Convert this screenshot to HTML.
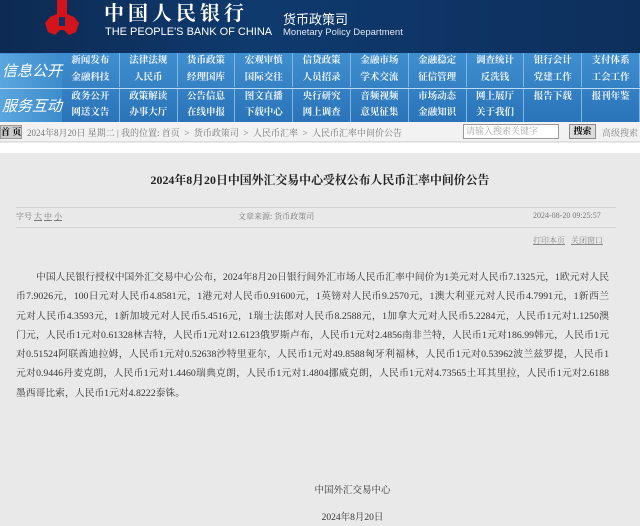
<!DOCTYPE html>
<html><head><meta charset="utf-8"><style>
*{margin:0;padding:0;box-sizing:border-box}
body{width:640px;height:526px;overflow:hidden;background:#e9e9e9;font-family:"Liberation Serif","Noto Serif CJK SC",serif;position:relative}
.hd{position:absolute;left:0;top:0;width:640px;height:53px;background:linear-gradient(90deg,#0d2a52,#0f3a6e 40%,#0d2f5c 100%)}
.nav{position:absolute;left:0;top:53px;width:640px;height:69px;background:linear-gradient(#3f8fd0,#2a73b8)}
.side{position:absolute;left:0;width:62px;height:34px;color:#fff;font-size:15px;font-style:italic;line-height:34px;padding-left:2px;font-family:"Noto Sans CJK SC",sans-serif;background:linear-gradient(90deg,#5aa6e0,#3d8ccb)}
.row{position:absolute;left:62px;width:578px;height:17px;display:flex}
.row span{width:57.8px;text-align:center;color:#f0f6ff;font-size:9.5px;font-weight:bold;line-height:17px;border-right:1px solid #7fb6e3}
.t{position:absolute;white-space:nowrap}
.bc{position:absolute;left:0;top:122px;width:640px;height:20px;background:#f2f2f2;border-bottom:1px solid #ddd}
.body{position:absolute;left:16px;top:268px;width:593px;font-size:9.8px;line-height:19.3px;color:#333}
.body div{white-space:nowrap;text-align:justify;text-align-last:justify}
.body div.l{text-align-last:left}
</style></head><body>
<div class="hd">
<svg style="position:absolute;left:44px;top:0" width="36" height="40" viewBox="0 0 36 40"><path d="M13 0h10v14l7 3 5 6-3 9-7 3-5-5h-4l-5 5-7-3-3-9 5-6 7-3z" fill="#d3141b"/><path d="M15 17h6v9h-6z" fill="#0e3263"/></svg>
<div class="t" style="left:104px;top:0px;color:#fff;font-size:20px;letter-spacing:4px;font-family:'Noto Serif CJK SC',serif;font-weight:bold;line-height:24px">中国人民银行</div>
<div class="t" style="left:105px;top:26px;color:#fff;font-size:11px;font-family:'Liberation Sans',sans-serif">THE PEOPLE'S BANK OF CHINA</div>
<div class="t" style="left:283px;top:9px;color:#fff;font-size:13px;font-family:'Noto Sans CJK SC',sans-serif">货币政策司</div>
<div class="t" style="left:283px;top:27px;color:#dfe8f5;font-size:9.5px;font-family:'Liberation Sans',sans-serif">Monetary Policy Department</div>
</div>
<div class="nav">
<div class="side" style="top:1px">信息公开</div>
<div class="side" style="top:35px;border-top:1px solid #bcdaf2">服务互动</div>
<div class="row" style="top:0"><span>新闻发布</span><span>法律法规</span><span>货币政策</span><span>宏观审慎</span><span>信贷政策</span><span>金融市场</span><span>金融稳定</span><span>调查统计</span><span>银行会计</span><span>支付体系</span></div>
<div class="row" style="top:17px"><span>金融科技</span><span>人民币</span><span>经理国库</span><span>国际交往</span><span>人员招录</span><span>学术交流</span><span>征信管理</span><span>反洗钱</span><span>党建工作</span><span>工会工作</span></div>
<div class="row" style="top:35px;border-top:1px solid #bcdaf2"><span>政务公开</span><span>政策解读</span><span>公告信息</span><span>图文直播</span><span>央行研究</span><span>音频视频</span><span>市场动态</span><span>网上展厅</span><span>报告下载</span><span>报刊年鉴</span></div>
<div class="row" style="top:52px"><span>网送文告</span><span>办事大厅</span><span>在线申报</span><span>下载中心</span><span>网上调查</span><span>意见征集</span><span>金融知识</span><span>关于我们</span><span></span><span></span></div>
</div>
<div class="bc">
<div class="t" style="left:0;top:3px;width:22px;height:14px;background:#ccc;border:1px solid #999;font-size:9px;line-height:12px;text-align:center;font-weight:bold">首 页</div>
<div class="t" style="left:27px;top:4px;font-size:9px;color:#777">2024年8月20日 星期二 | 我的位置: 首页 &nbsp;&gt;&nbsp; 货币政策司 &nbsp;&gt;&nbsp; 人民币汇率 &nbsp;&gt;&nbsp; 人民币汇率中间价公告</div>
<div class="t" style="left:463px;top:2px;width:96px;height:15px;background:#fff;border:1px solid #999;font-size:9px;color:#aaa;line-height:13px;padding-left:2px">请输入搜索关键字</div>
<div class="t" style="left:569px;top:2px;width:27px;height:15px;background:#ddd;border:1px solid #888;font-size:9px;line-height:13px;text-align:center;font-weight:bold">搜索</div>
<div class="t" style="left:602px;top:4px;font-size:9px;color:#888">高级搜索</div>
</div>
<div class="t" style="left:0;top:143px;width:640px;height:10px;background:#fff"></div>
<div class="t" style="left:0;top:171px;width:640px;text-align:center;font-size:11.9px;font-weight:bold;color:#222">2024年8月20日中国外汇交易中心受权公布人民币汇率中间价公告</div>
<div class="t" style="left:16px;top:207px;width:600px;height:1px;background:#d4d4d4"></div>
<div class="t" style="left:16px;top:211px;font-size:8px;color:#777">字号 <u>大</u> <u>中</u> <u>小</u></div>
<div class="t" style="left:238px;top:211px;font-size:8px;color:#777">文章来源: 货币政策司</div>
<div class="t" style="left:533px;top:211px;font-size:8px;color:#777">2024-08-20 09:25:57</div>
<div class="t" style="left:16px;top:227px;width:600px;height:1px;background:#d4d4d4"></div>
<div class="t" style="left:533px;top:235px;font-size:8px;color:#888"><u>打印本页</u> &nbsp;&nbsp;<u>关闭窗口</u></div>
<div class="body">
<div style="padding-left:20px">中国人民银行授权中国外汇交易中心公布，2024年8月20日银行间外汇市场人民币汇率中间价为1美元对人民币7.1325元，1欧元对人民</div>
<div>币7.9026元，100日元对人民币4.8581元，1港元对人民币0.91600元，1英镑对人民币9.2570元，1澳大利亚元对人民币4.7991元，1新西兰</div>
<div>元对人民币4.3593元，1新加坡元对人民币5.4516元，1瑞士法郎对人民币8.2588元，1加拿大元对人民币5.2284元，人民币1元对1.1250澳</div>
<div>门元，人民币1元对0.61328林吉特，人民币1元对12.6123俄罗斯卢布，人民币1元对2.4856南非兰特，人民币1元对186.99韩元，人民币1元</div>
<div>对0.51524阿联酋迪拉姆，人民币1元对0.52638沙特里亚尔，人民币1元对49.8588匈牙利福林，人民币1元对0.53962波兰兹罗提，人民币1</div>
<div>元对0.9446丹麦克朗，人民币1元对1.4460瑞典克朗，人民币1元对1.4804挪威克朗，人民币1元对4.73565土耳其里拉，人民币1元对2.6188</div>
<div class="l">墨西哥比索，人民币1元对4.8222泰铢。</div>
</div>
<div class="t" style="left:0;top:482px;width:705px;text-align:center;font-size:9.5px;color:#333">中国外汇交易中心</div>
<div class="t" style="left:0;top:509px;width:705px;text-align:center;font-size:9.5px;color:#333">2024年8月20日</div>
</body></html>
